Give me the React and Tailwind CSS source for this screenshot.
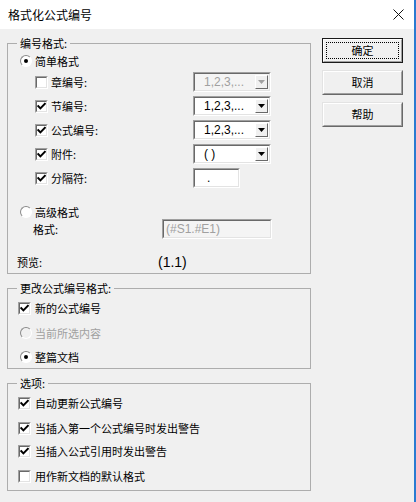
import React from 'react';

const cjk = { fontFamily: '"Noto Sans CJK SC", "Microsoft YaHei", sans-serif' };

const CheckBox = ({ checked }) => (
  <span className="inline-flex w-[13px] h-[13px] shrink-0 border border-t-[#a0a0a0] border-l-[#a0a0a0] border-b-white border-r-white">
    <span className="flex-1 flex items-center justify-center bg-white border border-t-[#696969] border-l-[#696969] border-b-[#e3e3e3] border-r-[#e3e3e3]">
      {checked && (
        <svg width="9" height="9" viewBox="0 0 9 9">
          <path d="M1.3 4.2 L3.4 6.4 L7.8 1.8" fill="none" stroke="#000" strokeWidth="2" strokeLinecap="square" />
        </svg>
      )}
    </span>
  </span>
);

const Radio = ({ checked, disabled }) => (
  <span
    className={
      'inline-flex w-[12px] h-[12px] shrink-0 rounded-full items-center justify-center border border-t-[#8a8a8a] border-l-[#8a8a8a] border-b-white border-r-white ' +
      (disabled ? 'bg-[#f0f0f0]' : 'bg-white')
    }
  >
    {checked && <span className="w-[4px] h-[4px] rounded-full bg-black" />}
  </span>
);

const Combo = ({ value, disabled }) => (
  <div className="flex w-[78px] h-[20px] border border-t-[#a0a0a0] border-l-[#a0a0a0] border-b-white border-r-white">
    <div
      className={
        'flex-1 flex items-center border border-t-[#696969] border-l-[#696969] border-b-[#e3e3e3] border-r-[#e3e3e3] pr-[1px] ' +
        (disabled ? 'bg-[#f4f4f4]' : 'bg-white')
      }
    >
      <span
        className={'flex-1 pl-[9px] text-[12px] leading-none whitespace-pre ' + (disabled ? 'text-[#a0a0a0]' : 'text-black')}
        style={{ fontFamily: '"Liberation Sans", Arial, sans-serif' }}
      >
        {value}
      </span>
      <span className="w-[13px] h-[14px] flex items-center justify-center bg-[#f0f0f0] border border-t-white border-l-white border-b-[#696969] border-r-[#696969]">
        <svg width="7" height="4" viewBox="0 0 7 4">
          <path d="M0 0 H7 L3.5 4 Z" fill={disabled ? '#a0a0a0' : '#000'} />
        </svg>
      </span>
    </div>
  </div>
);

const TextBox = ({ value, width, disabled }) => (
  <div className={'flex h-[20px] border border-t-[#a0a0a0] border-l-[#a0a0a0] border-b-white border-r-white ' + width}>
    <div
      className={
        'flex-1 flex items-center border border-t-[#696969] border-l-[#696969] border-b-[#e3e3e3] border-r-[#e3e3e3] ' +
        (disabled ? 'bg-[#f4f4f4] pl-[2px]' : 'bg-white pl-[12px]')
      }
    >
      <span
        className={'text-[12px] leading-none ' + (disabled ? 'text-[#a0a0a0]' : 'text-black')}
        style={{ fontFamily: '"Liberation Sans", Arial, sans-serif' }}
      >
        {value}
      </span>
    </div>
  </div>
);

const Group = ({ title, children, className }) => (
  <fieldset className={'border border-[#adadad] ' + (className || '')}>
    <legend className="ml-[9px] px-[3px] text-[11px] leading-[16px] text-black" style={cjk}>
      {title}
    </legend>
    {children}
  </fieldset>
);

const NumRow = ({ label, checked, children }) => (
  <div className="flex items-center h-[24px] pl-[27px]">
    <div className="flex items-center gap-[3px] w-[158px]">
      <CheckBox checked={checked} />
      <span className="text-[11px]">{label}</span>
    </div>
    {children}
  </div>
);

const Button = ({ label, isDefault }) => (
  <div
    className={
      'w-[81px] h-[25px] flex ' + (isDefault ? 'border border-[#1a1a1a]' : 'border border-t-[#e3e3e3] border-l-[#e3e3e3] border-b-[#696969] border-r-[#696969]')
    }
  >
    <div className="flex-1 flex p-[2px] bg-[#f0f0f0] border border-t-white border-l-white border-b-[#a0a0a0] border-r-[#a0a0a0]">
      <div className={'flex-1 flex items-center justify-center text-[11px] ' + (isDefault ? 'border border-dotted border-black' : '')}>
        {label}
      </div>
    </div>
  </div>
);

export default function App() {
  return (
    <div className="w-[416px] h-[502px] bg-[#f0f0f0] flex flex-col text-black border-r-[2px] border-[#2b7bd1]" style={cjk}>
      <div className="h-[29px] shrink-0 bg-white flex items-center justify-between pl-[8px] pr-[10px]">
        <span className="text-[12px] leading-none">格式化公式编号</span>
        <svg width="11" height="11" viewBox="0 0 11 11">
          <path d="M0.5 0.5 L10.5 10.5 M10.5 0.5 L0.5 10.5" stroke="#111" strokeWidth="1" />
        </svg>
      </div>

      <div className="flex pl-[7px]">
        <div className="w-[304px] pt-[6px] flex flex-col gap-[6px]">
          <Group title="编号格式:" className="pb-[1px]">
            <div className="flex items-center gap-[3px] h-[18px] mt-[1px] pl-[12px]">
              <Radio checked />
              <span className="text-[11px]">简单格式</span>
            </div>
            <NumRow label="章编号:">
              <Combo value="1,2,3,..." disabled />
            </NumRow>
            <NumRow label="节编号:" checked>
              <Combo value="1,2,3,..." />
            </NumRow>
            <NumRow label="公式编号:" checked>
              <Combo value="1,2,3,..." />
            </NumRow>
            <NumRow label="附件:" checked>
              <Combo value="( )" />
            </NumRow>
            <NumRow label="分隔符:" checked>
              <TextBox value="." width="w-[47px]" />
            </NumRow>

            <div className="flex items-center gap-[3px] h-[14px] mt-[15px] pl-[12px]">
              <Radio />
              <span className="text-[11px]">高级格式</span>
            </div>
            <div className="flex items-center h-[20px] pl-[25px]">
              <span className="text-[11px] w-[129px]">格式:</span>
              <TextBox value="(#S1.#E1)" width="w-[110px]" disabled />
            </div>
            <div className="flex items-center h-[20px] mt-[13px] pl-[9px]">
              <span className="text-[11px] w-[141px]">预览:</span>
              <span className="text-[14px] leading-none" style={{ fontFamily: '"Liberation Sans", Arial, sans-serif' }}>
                (1.1)
              </span>
            </div>
          </Group>

          <Group title="更改公式编号格式:">
            <div className="flex items-center gap-[4px] h-[24px] pl-[10px]">
              <CheckBox checked />
              <span className="text-[11px]">新的公式编号</span>
            </div>
            <div className="flex items-center gap-[3px] h-[24px] mt-[1px] pl-[12px]">
              <Radio disabled />
              <span className="text-[11px] text-[#a0a0a0]">当前所选内容</span>
            </div>
            <div className="flex items-center gap-[3px] h-[22px] mt-[1px] pl-[12px]">
              <Radio checked />
              <span className="text-[11px]">整篇文档</span>
            </div>
          </Group>

          <Group title="选项:" className="pb-[2px]">
            <div className="flex items-center gap-[4px] h-[24px] pl-[10px]">
              <CheckBox checked />
              <span className="text-[11px]">自动更新公式编号</span>
            </div>
            <div className="flex items-center gap-[4px] h-[24px] mt-[1px] pl-[10px]">
              <CheckBox checked />
              <span className="text-[11px]">当插入第一个公式编号时发出警告</span>
            </div>
            <div className="flex items-center gap-[4px] h-[24px] mt-[-1px] pl-[10px]">
              <CheckBox checked />
              <span className="text-[11px]">当插入公式引用时发出警告</span>
            </div>
            <div className="flex items-center gap-[4px] h-[24px] mt-[1px] pl-[10px]">
              <CheckBox />
              <span className="text-[11px]">用作新文档的默认格式</span>
            </div>
          </Group>
        </div>

        <div className="ml-[11px] pt-[9px] flex flex-col gap-[7px]">
          <Button label="确定" isDefault />
          <Button label="取消" />
          <Button label="帮助" />
        </div>
      </div>
    </div>
  );
}
